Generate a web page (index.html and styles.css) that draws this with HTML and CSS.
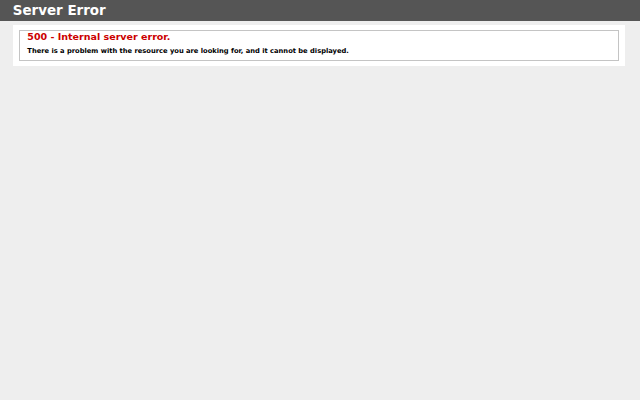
FILE: index.html
```
<!DOCTYPE html>
<html>
<head>
<meta charset="utf-8">
<title>500 - Internal server error.</title>
<link rel="stylesheet" href="styles.css">
</head>
<body>
<div class="header"><h1>Server Error</h1></div>
<div class="content">
  <div class="content-container">
    <fieldset class="box">
      <h2>500 - Internal server error.</h2>
      <h3>There is a problem with the resource you are looking for, and it cannot be displayed.</h3>
    </fieldset>
  </div>
</div>
</body>
</html>
```
FILE: styles.css
```
html, body { margin: 0; }
body {
  font-size: 5.6px;
  font-family: "DejaVu Sans", Verdana, sans-serif;
  background: #eeeeee;
}
.header {
  padding: 3px 12.8px;
  background-color: #555555;
  color: #fff;
}
.header h1 {
  font-size: 13.44px;
  margin: 0;
  color: #fff;
  font-weight: bold;
}
.content {
  margin: 0 0 0 12.8px;
}
.content-container {
  background: #fff;
  width: 602px;
  margin-top: 4px;
  padding: 5px;
}
.box {
  margin: 0 1px;
  padding: 0 7.5px 5px 7.5px;
  border: 1px solid #c4c4c4;
}
h2 {
  font-size: 9.52px;
  margin: 0;
  color: #cc0000;
}
h3 {
  font-size: 6.72px;
  margin: 5px 0 0 0;
  color: #000;
}
```
